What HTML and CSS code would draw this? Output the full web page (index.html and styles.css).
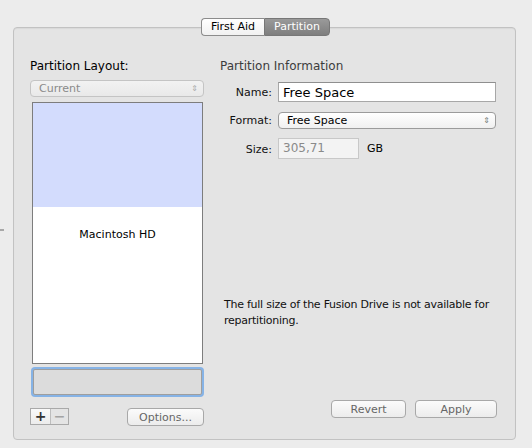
FILE: index.html
```html
<!DOCTYPE html>
<html lang="en">
<head>
  <meta charset="UTF-8">
  <title>Disk Utility - Partition</title>
  <link rel="stylesheet" href="styles.css">
</head>
<body>
  <div class="window">
    <span class="splitter"></span>
    <div class="panel">
      <div class="tabs">
        <div class="tab">First Aid</div>
        <div class="tab selected">Partition</div>
      </div>
      <div class="panel-body">
        <div class="left">
          <h2>Partition Layout:</h2>
          <div class="popup disabled">Current<span class="arrows">&#8661;</span></div>
          <div class="layout">
            <div class="part free"></div>
            <div class="part used">Macintosh HD</div>
          </div>
          <div class="focus-box"></div>
          <div class="left-buttons">
            <div class="pm">
              <span class="pm-btn">+</span><span class="pm-btn off">&minus;</span>
            </div>
            <button class="btn">Options...</button>
          </div>
        </div>
        <div class="right">
          <h2 class="light">Partition Information</h2>
          <div class="form">
            <label>Name:</label>
            <div class="field name">Free Space</div>
            <label>Format:</label>
            <div class="popup">Free Space<span class="arrows">&#8661;</span></div>
            <label>Size:</label>
            <div class="size-row"><div class="field size">305,71</div><span class="unit">GB</span></div>
          </div>
          <p class="note">The full size of the Fusion Drive is not available for repartitioning.</p>
          <div class="right-buttons">
            <button class="btn revert">Revert</button>
            <button class="btn apply">Apply</button>
          </div>
        </div>
      </div>
    </div>
  </div>
</body>
</html>
```

FILE: styles.css
```css
* { margin: 0; padding: 0; box-sizing: border-box; }
body {
  font-family: 'DejaVu Sans', 'Liberation Sans', sans-serif;
  background: #ececec;
  color: #000;
  width: 532px;
  height: 448px;
  overflow: hidden;
}
.window {
  position: relative;
  padding: 27px 16px 0 13px;
}
/* little drag handle at the far left edge */
.splitter {
  position: absolute;
  left: 0;
  top: 229px;
  width: 4px;
  height: 2px;
  background: #a8a8a8;
}
.panel {
  height: 413px;
  background: #e4e4e4;
  border: 1px solid #c2c2c2;
  border-radius: 4px;
  box-shadow: inset 0 1px 1px rgba(0,0,0,0.05);
}

/* tabs sit on the top border */
.tabs {
  display: flex;
  justify-content: center;
  margin: -10px 0 0 2px;
}
.tab {
  height: 18px;
  font-size: 11px;
  line-height: 16px;
  text-align: center;
  white-space: nowrap;
  border: 1px solid #8c8c8c;
  background: linear-gradient(#fff, #f1f1f1);
}
.tab:first-child {
  width: 63px;
  border-radius: 4px 0 0 4px;
  border-right: none;
}
.tab.selected {
  width: 66px;
  color: #fff;
  border-radius: 0 4px 4px 0;
  background: linear-gradient(#9a9a9a, #7e7e7e);
  border-color: #777;
}

.panel-body {
  display: flex;
  padding: 22px 19px 0 16px;
  height: 394px;
}
h2 {
  font-size: 12px;
  font-weight: normal;
  line-height: 16px;
  height: 16px;
}
h2.light { color: #3c3c3c; }

.left {
  width: 174px;
  display: flex;
  flex-direction: column;
}
.popup {
  position: relative;
  height: 17px;
  border: 1px solid #9b9b9b;
  border-radius: 4px;
  background: linear-gradient(#fff, #f0f0f0);
  font-size: 11px;
  line-height: 15px;
  padding-left: 8px;
}
.popup.disabled {
  margin-top: 6px;
  color: #8a8a8a;
  border-color: #c4c4c4;
  background: linear-gradient(#f2f2f2, #e9e9e9);
}
.arrows {
  position: absolute;
  right: 5px;
  top: 0;
  font-size: 8px;
  color: #777;
}
.disabled .arrows { color: #aaa; }

.layout {
  margin: 5px 1px 0 2px;
  height: 262px;
  border: 1px solid #7d7d7d;
  display: flex;
  flex-direction: column;
}
.part.free {
  height: 104px;
  background: #d3dcfd;
}
.part.used {
  flex: 1;
  background: #fff;
  text-align: center;
  font-size: 11px;
  padding-top: 21px;
}
.focus-box {
  margin: 5px 2px 0 3px;
  height: 26px;
  background: #dcdcdc;
  border: 1px solid #9e9e9e;
  border-radius: 2px;
  box-shadow: 0 0 0 2px #86b3e6;
}
.left-buttons {
  display: flex;
  margin-top: 13px;
}
.pm {
  display: flex;
  border: 1px solid #a9a9a9;
  height: 17px;
}
.pm-btn {
  width: 19px;
  text-align: center;
  font-size: 14px;
  font-weight: bold;
  line-height: 15px;
  color: #333;
  background: linear-gradient(#fafafa, #ececec);
}
.pm-btn.off {
  width: 18px;
  color: #a3a3a3;
  border-left: 1px solid #bdbdbd;
  background: #e4e4e4;
}
.btn {
  height: 18px;
  font-family: inherit;
  font-size: 11px;
  color: #666;
  border: 1px solid #a8a8a8;
  border-radius: 4px;
  background: linear-gradient(#fbfbfb, #ececec);
}
.left-buttons .btn {
  width: 78px;
  margin-left: 58px;
}

.right {
  flex: 1;
  margin-left: 16px;
  display: flex;
  flex-direction: column;
}
.form {
  display: grid;
  grid-template-columns: 52px 218px;
  column-gap: 6px;
  row-gap: 10px;
  margin-top: 8px;
  align-items: center;
  font-size: 11px;
}
.form label {
  text-align: right;
  color: #111;
}
.field {
  background: #fff;
  border: 1px solid #a7a7a7;
  height: 21px;
  padding-left: 4px;
}
.field.name {
  font-size: 13px;
  line-height: 19px;
  height: 20px;
  border-top-color: #8f8f8f;
}
.size-row {
  display: flex;
  align-items: center;
  margin-top: -1px;
}
.field.size {
  width: 81px;
  font-size: 12px;
  line-height: 19px;
  color: #8a8a8a;
  background: #f3f3f3;
  border-color: #c8c8c8;
}
.unit { margin-left: 8px; font-size: 11px; }

.note {
  margin: 138px 0 0 4px;
  font-size: 11px;
  letter-spacing: -0.25px;
  line-height: 16px;
  color: #111;
}
.right-buttons {
  margin-top: auto;
  margin-bottom: 12px;
  display: flex;
  gap: 9px;
  padding-left: 111px;
}
.btn.revert { width: 75px; }
.btn.apply { width: 82px; }
```
